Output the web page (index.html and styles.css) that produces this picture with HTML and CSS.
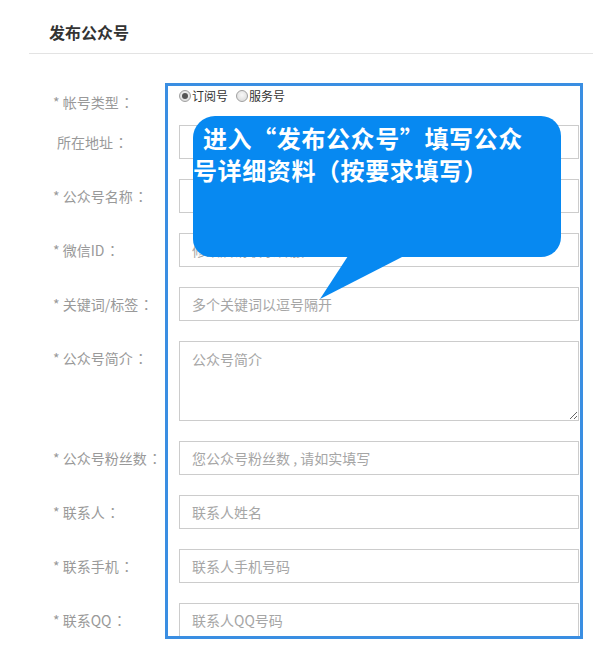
FILE: index.html
```html
<!DOCTYPE html>
<html lang="zh-CN">
<head>
<meta charset="utf-8">
<title>发布公众号</title>
<link rel="stylesheet" href="styles.css">
</head>
<body>
<div class="page">
  <div class="header"><h1 class="title">发布公众号</h1></div>
  <form class="form">
    <div class="row row-type">
      <label class="label">* 帐号类型<span class="colon" lang="zh-TW">：</span></label>
      <div class="radios">
        <label class="radio"><input type="radio" name="type" checked><span>订阅号</span></label>
        <label class="radio"><input type="radio" name="type"><span>服务号</span></label>
      </div>
    </div>
    <div class="row">
      <label class="label label-plain">所在地址<span class="colon" lang="zh-TW">：</span></label>
      <input class="field" type="text" placeholder="">
    </div>
    <div class="row">
      <label class="label">* 公众号名称<span class="colon" lang="zh-TW">：</span></label>
      <input class="field" type="text" placeholder="">
    </div>
    <div class="row">
      <label class="label">* 微信ID<span class="colon" lang="zh-TW">：</span></label>
      <input class="field" type="text" placeholder="修改后请联系客服">
    </div>
    <div class="row">
      <label class="label">* 关键词/标签<span class="colon" lang="zh-TW">：</span></label>
      <input class="field" type="text" placeholder="多个关键词以逗号隔开">
    </div>
    <div class="row row-area">
      <label class="label">* 公众号简介<span class="colon" lang="zh-TW">：</span></label>
      <textarea class="field area" placeholder="公众号简介"></textarea>
    </div>
    <div class="row">
      <label class="label">* 公众号粉丝数<span class="colon" lang="zh-TW">：</span></label>
      <input class="field" type="text" placeholder="您公众号粉丝数 , 请如实填写">
    </div>
    <div class="row">
      <label class="label">* 联系人<span class="colon" lang="zh-TW">：</span></label>
      <input class="field" type="text" placeholder="联系人姓名">
    </div>
    <div class="row">
      <label class="label">* 联系手机<span class="colon" lang="zh-TW">：</span></label>
      <input class="field" type="text" placeholder="联系人手机号码">
    </div>
    <div class="row">
      <label class="label">* 联系QQ<span class="colon" lang="zh-TW">：</span></label>
      <input class="field" type="text" placeholder="联系人QQ号码">
    </div>
  </form>

  <div class="highlight"></div>
  <div class="bubble">
    <p class="bubble-text"><span class="line1">进入“发布公众号”填写公众</span><br>号详细资料（按要求填写）</p>
    <svg class="tail" width="90" height="44" viewBox="0 0 90 44">
      <polygon points="28,0 84,0 0,43" fill="#0789f1"/>
    </svg>
  </div>
</div>
</body>
</html>
```
FILE: styles.css
```css
html, body {
  margin: 0;
  padding: 0;
  background: #fff;
}
body {
  font-family: "Noto Sans CJK SC", "Microsoft YaHei", sans-serif;
  overflow: hidden;
}
.page {
  position: relative;
  width: 593px;
  height: 649px;
  overflow: hidden;
}
.header {
  margin-left: 29px;
  padding: 20px 0 9px 20px;
  border-bottom: 1px solid #e3e3e3;
}
.title {
  margin: 0;
  font-size: 16px;
  line-height: 24px;
  font-weight: bold;
  color: #333;
}
.form {
  margin: 31px 0 0 0;
  padding-left: 53px;
  display: flex;
  flex-direction: column;
}
.row {
  display: flex;
  align-items: flex-start;
  margin-bottom: 20px;
}
.row-type {
  margin-bottom: 6px;
  height: 34px;
}
.label {
  width: 126px;
  flex: none;
  font-size: 14px;
  line-height: 34px;
  color: #999;
  white-space: nowrap;
}
.colon {
  font-family: "Noto Sans CJK TC", "Noto Sans CJK SC", sans-serif;
  padding-left: 1px;
}
.label-plain {
  padding-left: 4px;
  width: 122px;
}
.radios {
  display: flex;
  align-items: center;
  margin-top: 3px;
}
.radio {
  display: flex;
  align-items: center;
  font-size: 12px;
  line-height: 16px;
  color: #333;
  margin-right: 8px;
}
.radio input {
  appearance: none;
  -webkit-appearance: none;
  margin: 0 1px 0 0;
  width: 12px;
  height: 12px;
  border-radius: 50%;
  border: 1px solid #a0a0a0;
  box-sizing: border-box;
  background: radial-gradient(circle at 50% 40%, #f8f8f8 0%, #d6d6d6 100%);
  position: relative;
}
.radio input:checked::after {
  content: "";
  position: absolute;
  left: 2px;
  top: 2px;
  width: 6px;
  height: 6px;
  border-radius: 50%;
  background: #555;
}
.field {
  width: 400px;
  height: 34px;
  box-sizing: border-box;
  border: 1px solid #cccccc;
  padding: 0 12px;
  margin: 0;
  font-family: inherit;
  font-size: 14px;
  color: #333;
  background: #fff;
  outline: none;
}
.field::placeholder {
  color: #a6a6a6;
}
.area {
  height: 80px;
  padding: 6px 12px;
  line-height: 22px;
  resize: both;
}
.highlight {
  position: absolute;
  left: 165px;
  top: 83px;
  width: 418px;
  height: 556px;
  box-sizing: border-box;
  border: 3px solid #3a8ee2;
  pointer-events: none;
}
.bubble {
  position: absolute;
  left: 193px;
  top: 116px;
  width: 368px;
  height: 141px;
  background: #0789f1;
  border-radius: 22px 20px 20px 18px;
}
.bubble-text {
  margin: 0;
  padding-top: 6px;
  font-size: 24px;
  line-height: 32px;
  font-weight: bold;
  letter-spacing: 0.6px;
  color: #fff;
  white-space: nowrap;
}
.line1 {
  padding-left: 10px;
}
.tail {
  position: absolute;
  left: 127px;
  top: 140px;
  display: block;
}
```
